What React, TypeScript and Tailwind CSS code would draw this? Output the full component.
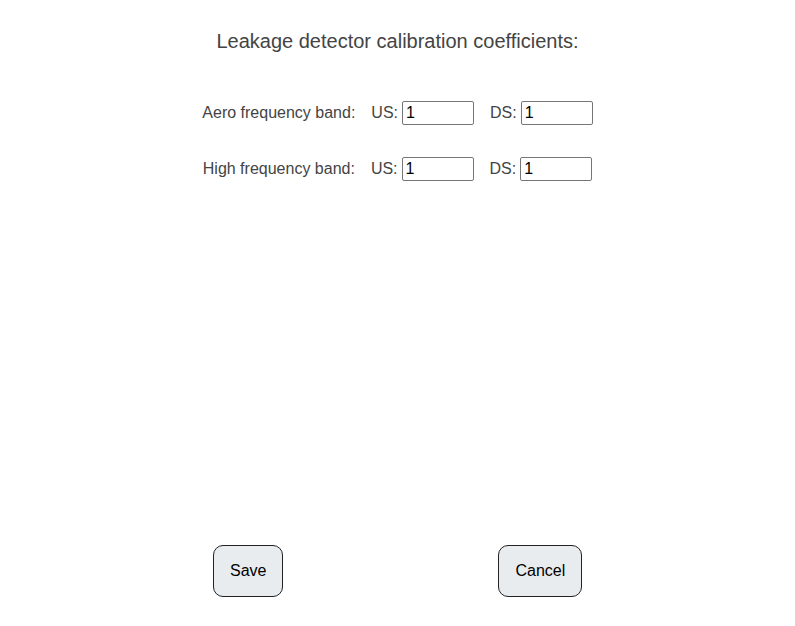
import React from "react";

function Field({ label, value }: { label: string; value: string }) {
  return (
    <div className="flex items-center">
      <span className="mr-[4px]">{label}</span>
      <input
        defaultValue={value}
        className="w-[72px] h-[24px] border border-[#767676] rounded-[2px] px-[3px] text-[16px] text-black bg-white outline-none"
        style={{ fontFamily: '"Liberation Sans", Arial, sans-serif' }}
      />
    </div>
  );
}

function Row({ label }: { label: string }) {
  return (
    <div className="flex items-center justify-center h-[24px]">
      <span className="mr-[16px]">{label}</span>
      <Field label="US:" value="1" />
      <div className="w-[16px]" />
      <Field label="DS:" value="1" />
    </div>
  );
}

export default function App() {
  return (
    <div
      className="w-[795px] h-[626px] bg-white text-[#444] text-[16px] flex flex-col"
      style={{ fontFamily: '"Liberation Sans", Arial, sans-serif' }}
    >
      <h1 className="text-[20px] leading-[28px] text-[#444] text-center pt-[27px]">
        Leakage detector calibration coefficients:
      </h1>
      <div className="flex flex-col gap-[32px] mt-[46px]">
        <Row label="Aero frequency band:" />
        <Row label="High frequency band:" />
      </div>
      <div className="flex mt-auto mb-[29px] pl-[213px]">
        <button className="h-[52px] px-[16px] border border-[#222] rounded-[10px] bg-[#e9ecef] text-black">
          Save
        </button>
        <div className="w-[215px]" />
        <button className="h-[52px] px-[16px] border border-[#222] rounded-[10px] bg-[#e9ecef] text-black">
          Cancel
        </button>
      </div>
    </div>
  );
}
